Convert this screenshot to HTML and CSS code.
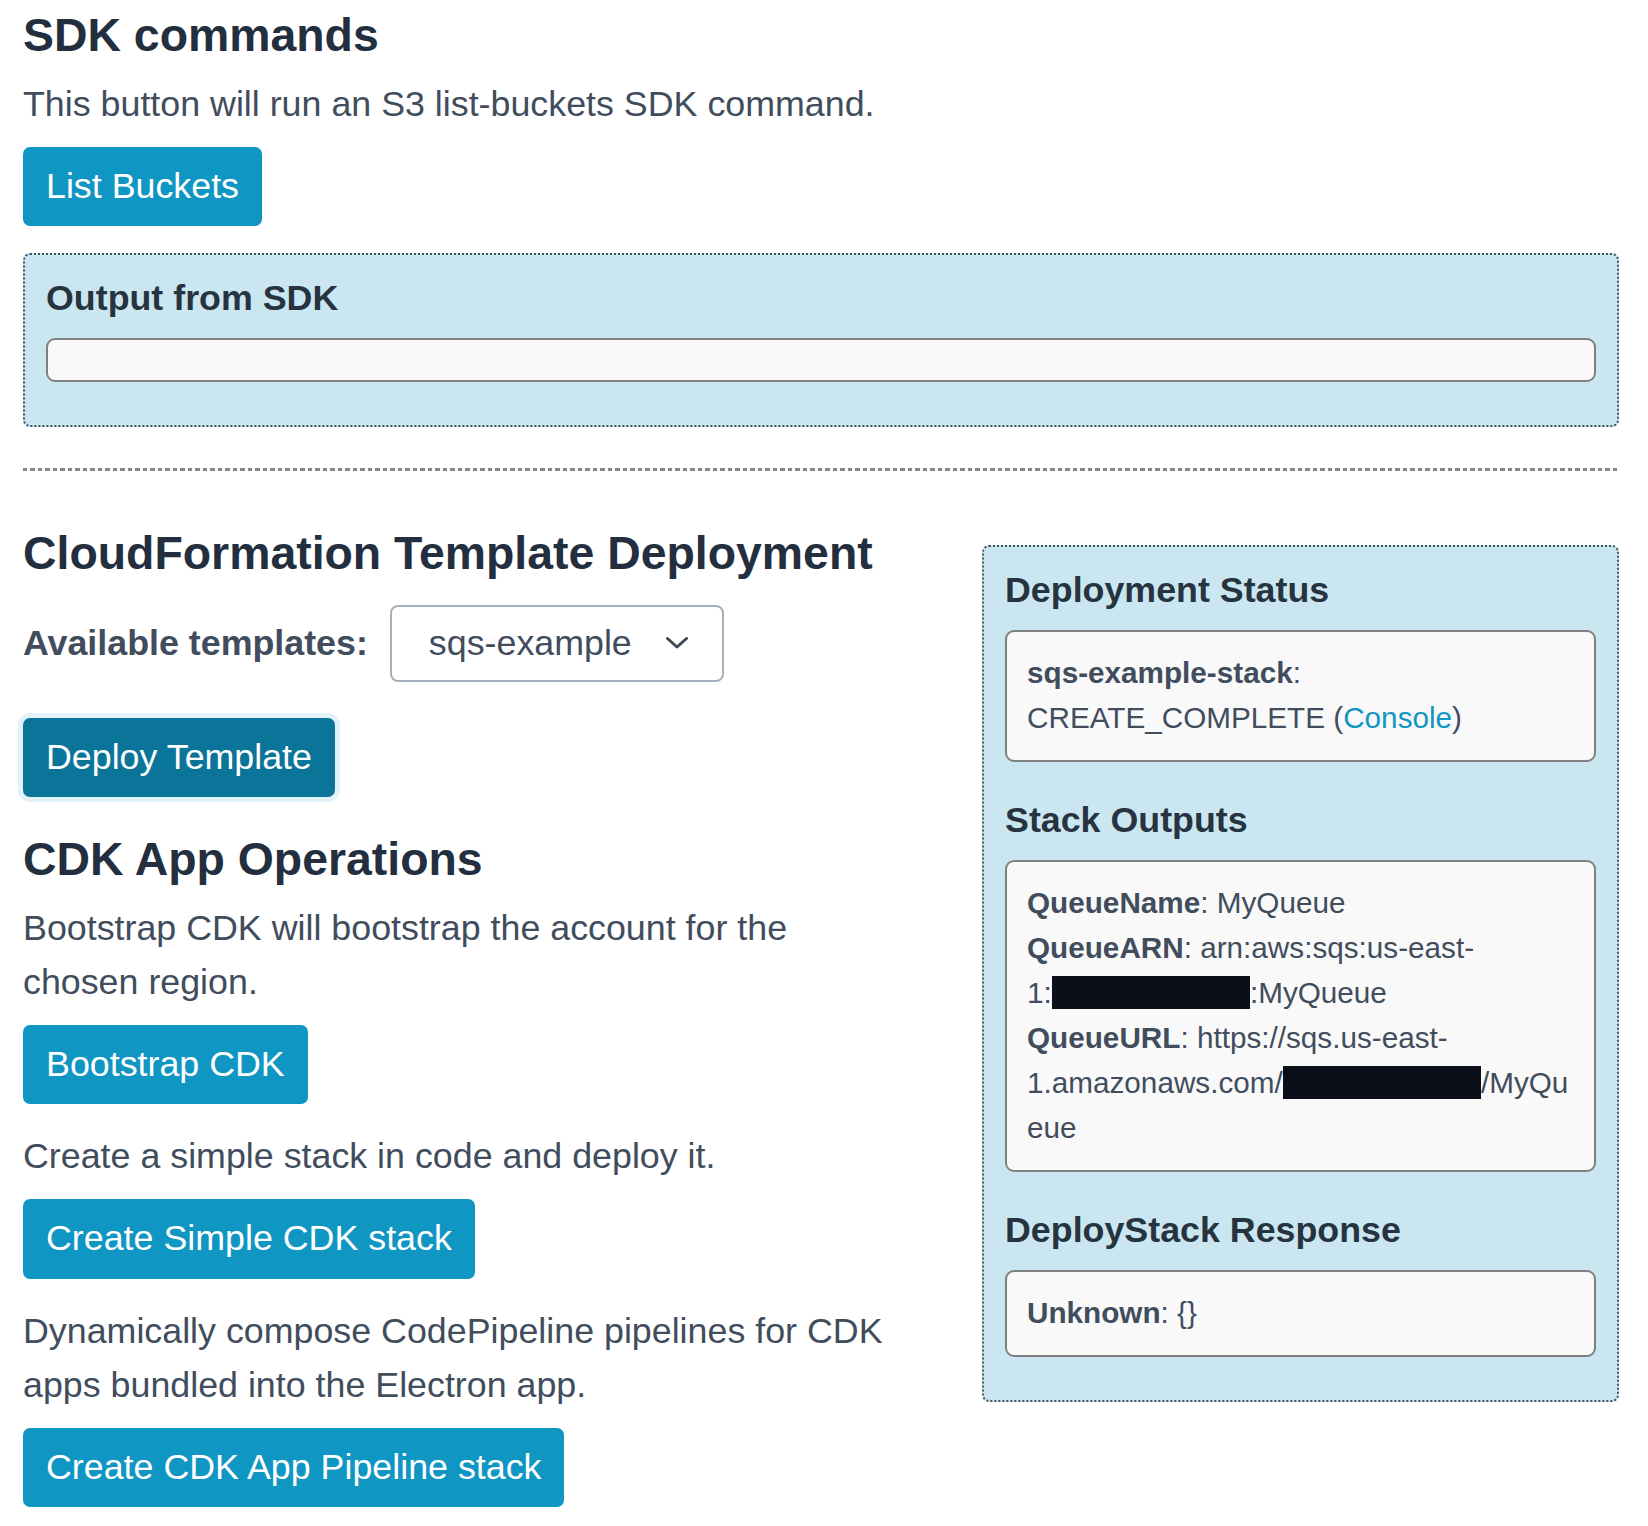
FILE: index.html
```html
<!DOCTYPE html>
<html lang="en">
<head>
<meta charset="utf-8">
<title>SDK commands</title>
<link rel="stylesheet" href="styles.css">
</head>
<body>
<main class="page">
  <section class="sdk">
    <h2 class="title">SDK commands</h2>
    <p class="text">This button will run an S3 list-buckets SDK command.</p>
    <div class="actions actions-sdk"><button class="btn" type="button">List Buckets</button></div>
    <div class="panel">
      <h3 class="panel-title">Output from SDK</h3>
      <div class="output-field"></div>
    </div>
  </section>

  <div class="separator"></div>

  <section class="deploy-grid">
    <div class="left-col">
      <h2 class="title">CloudFormation Template Deployment</h2>
      <div class="template-row">
        <span class="field-label">Available templates:</span>
        <div class="select">
          <span class="select-value">sqs-example</span>
          <svg class="chevron" width="22" height="12" viewBox="0 0 22 12" aria-hidden="true"><path d="M1.5 1.5 L11 10 L20.5 1.5" fill="none" stroke="#3d4a59" stroke-width="3" stroke-linecap="round" stroke-linejoin="round"/></svg>
        </div>
      </div>
      <div class="actions actions-deploy"><button class="btn btn-active" type="button">Deploy Template</button></div>

      <h2 class="title">CDK App Operations</h2>
      <p class="text">Bootstrap CDK will bootstrap the account for the chosen region.</p>
      <div class="actions"><button class="btn" type="button">Bootstrap CDK</button></div>
      <p class="text">Create a simple stack in code and deploy it.</p>
      <div class="actions"><button class="btn" type="button">Create Simple CDK stack</button></div>
      <p class="text">Dynamically compose CodePipeline pipelines for CDK apps bundled into the Electron app.</p>
      <div class="actions actions-last"><button class="btn" type="button">Create CDK App Pipeline stack</button></div>
    </div>

    <aside class="panel status-panel">
      <h3 class="panel-title">Deployment Status</h3>
      <div class="info-box">
        <b>sqs-example-stack</b>: CREATE_COMPLETE (<a class="link" href="#">Console</a>)
      </div>

      <h3 class="panel-title">Stack Outputs</h3>
      <div class="info-box">
        <div><b>QueueName</b>: MyQueue</div>
        <div><b>QueueARN</b>: arn:aws:sqs:us-east-<wbr>1:<span class="redact">123456789012</span>:MyQueue</div>
        <div><b>QueueURL</b>: https://sqs.us-east-<wbr>1.amazonaws.com/<span class="redact">123456789012</span>/MyQueue</div>
      </div>

      <h3 class="panel-title">DeployStack Response</h3>
      <div class="info-box">
        <b>Unknown</b>: {}
      </div>
    </aside>
  </section>
</main>
</body>
</html>
```

FILE: styles.css
```css
* {
  box-sizing: border-box;
}

html, body {
  margin: 0;
  background: #ffffff;
}

body {
  font-family: "Liberation Sans", Arial, Helvetica, sans-serif;
  color: #414d5c;
}

.page {
  padding: 8px 29px 0 23px;
}

.title {
  margin: 0 0 14.4px;
  font-size: 46.4px;
  line-height: 55.7px;
  font-weight: 700;
  color: #232f3e;
}

.text {
  margin: 0 0 15px;
  font-size: 35.8px;
  line-height: 53.8px;
}

.actions {
  display: flex;
  margin-bottom: 26.2px;
}

.actions-sdk {
  margin-bottom: 27px;
}

.actions-deploy {
  margin-top: 35.7px;
  margin-bottom: 34.7px;
}

.actions-last {
  margin-bottom: 0;
}

.btn {
  display: inline-block;
  margin: 0;
  padding: 13px 23px;
  border: 0;
  border-radius: 7px;
  background: #1096c3;
  color: #ffffff;
  font-family: inherit;
  font-size: 35.8px;
  line-height: 53.6px;
  cursor: pointer;
}

.btn-active {
  background: #0a7598;
  box-shadow: 0 0 0 5px #e1f2f8;
}

.panel {
  border: 2px dotted #45525f;
  border-radius: 7px;
  background: #cae7f1;
  padding: 22px 21px 43px;
}

.panel-title {
  margin: 0 0 18px;
  font-size: 35.8px;
  line-height: 43px;
  font-weight: 700;
  color: #27333f;
}

.output-field {
  height: 43.4px;
  border: 2px solid #808080;
  border-radius: 9px;
  background: #f9f9f9;
}

.separator {
  height: 3px;
  margin: 41.3px 0 55.1px;
  background: repeating-linear-gradient(to right, #858585 0 4.3px, transparent 4.3px 7.5px);
}

.deploy-grid {
  display: grid;
  grid-template-columns: 880px 1fr;
  column-gap: 79px;
  align-items: start;
}

.template-row {
  display: flex;
  align-items: center;
  gap: 22px;
  margin-top: 23px;
}

.field-label {
  font-size: 35.8px;
  line-height: 53.6px;
  font-weight: 700;
}

.select {
  display: flex;
  align-items: center;
  width: 334px;
  height: 77px;
  padding: 0 34px 0 37px;
  border: 2px solid #a4b1bc;
  border-radius: 8px;
  background: #ffffff;
}

.select-value {
  font-size: 35.8px;
  line-height: 53.6px;
}

.chevron {
  margin-left: auto;
  display: block;
}

.status-panel {
  margin-top: 18.6px;
}

.info-box {
  margin-bottom: 37px;
  padding: 18px 20px 20px;
  border: 2px solid #808080;
  border-radius: 9px;
  background: #f9f9f9;
  font-size: 29.7px;
  line-height: 45px;
  overflow-wrap: anywhere;
}

.info-box:last-child {
  margin-bottom: 0;
}

.info-box b {
  font-weight: 700;
}

.link {
  color: #0f96c3;
  text-decoration: none;
}

.redact {
  background: #0b0f19;
  color: #0b0f19;
}
```
